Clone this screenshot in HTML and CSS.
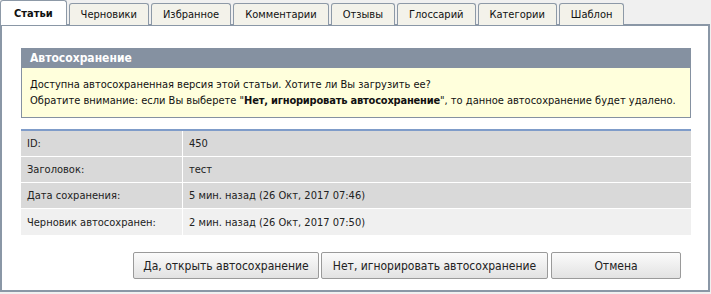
FILE: index.html
```html
<!DOCTYPE html>
<html lang="ru">
<head>
  <meta charset="UTF-8">
  <title>Автосохранение</title>
  <link rel="stylesheet" href="styles.css">
</head>
<body>
  <div class="tabs">
    <a class="tab active">Статьи</a>
    <a class="tab">Черновики</a>
    <a class="tab">Избранное</a>
    <a class="tab">Комментарии</a>
    <a class="tab">Отзывы</a>
    <a class="tab">Глоссарий</a>
    <a class="tab">Категории</a>
    <a class="tab">Шаблон</a>
  </div>

  <div class="panel">
    <!-- autosave notice -->
    <div class="notice">
      <div class="notice-head">Автосохранение</div>
      <div class="notice-body">
        Доступна автосохраненная версия этой статьи. Хотите ли Вы загрузить ее?<br>
        Обратите внимание: если Вы выберете "<b>Нет, игнорировать автосохранение</b>", то данное автосохранение будет удалено.
      </div>
    </div>

    <table class="info">
      <tr><td class="label">ID:</td><td>450</td></tr>
      <tr><td class="label">Заголовок:</td><td>тест</td></tr>
      <tr><td class="label">Дата сохранения:</td><td>5 мин. назад (26 Окт, 2017 07:46)</td></tr>
      <tr class="alt"><td class="label">Черновик автосохранен:</td><td>2 мин. назад (26 Окт, 2017 07:50)</td></tr>
    </table>

    <div class="buttons">
      <button type="button" class="btn btn-open">Да, открыть автосохранение</button>
      <button type="button" class="btn btn-ignore">Нет, игнорировать автосохранение</button>
      <button type="button" class="btn btn-cancel">Отмена</button>
    </div>
  </div>
</body>
</html>
```

FILE: styles.css
```css
body {
  margin: 0;
  background: #f0f0f0;
  font-family: "DejaVu Sans Condensed", "Liberation Sans", sans-serif;
  font-size: 11px;
  color: #111;
  width: 710px;
}

.tabs {
  display: flex;
  align-items: flex-end;
  gap: 2px;
  height: 25px;
  position: relative;
  z-index: 1;
  margin-bottom: -1px;
}

.tab {
  height: 21px;
  line-height: 21px;
  padding: 0 11px;
  background: #f3f2ea;
  border: 1px solid #8d99a7;
  border-bottom: none;
  border-radius: 3px 3px 0 0;
  color: #111;
}

.tab.active {
  height: 24px;
  line-height: 26px;
  background: #fff;
  font-weight: bold;
  padding: 0 13px;
}

.panel {
  background: #fff;
  border: 2px solid #8a97a6;
  padding: 22px 17px 11px 19px;
  width: 670px;
}

.notice-head {
  background: #8591a1;
  color: #fff;
  font-weight: bold;
  font-size: 12px;
  height: 20px;
  line-height: 20px;
  padding-left: 9px;
}

.notice-body {
  background: #ffffdc;
  border: 1px solid #8591a1;
  border-top: none;
  padding: 9px 6px 8px 8px;
  line-height: 16px;
  white-space: nowrap;
}

.notice-body b {
  letter-spacing: -0.2px;
}

.info {
  width: 100%;
  margin-top: 11px;
  border-collapse: collapse;
  border-top: 2px solid #7f9cc9;
  color: #222;
}

.info td {
  background: #d9d9d9;
  height: 25px;
  padding: 0 0 0 6px;
  border-bottom: 1px solid #fff;
}

.info td.label {
  width: 155px;
  border-right: 1px solid #fff;
}

.info tr.alt td {
  background: #f0f0f0;
  height: 26px;
  border-bottom: none;
}

.buttons {
  display: flex;
  justify-content: flex-end;
  gap: 2px;
  margin-top: 17px;
  padding-right: 10px;
}

.btn {
  height: 27px;
  font-family: inherit;
  font-size: 12px;
  color: #222;
  background: linear-gradient(#fbfbfb, #e2e2e2);
  border: 1px solid #9a9a9a;
  border-radius: 2px;
  padding: 0 8px;
}

.btn-open { width: 186px; }
.btn-ignore { width: 227px; }
.btn-cancel { width: 130px; margin-left: 1px; }
```
